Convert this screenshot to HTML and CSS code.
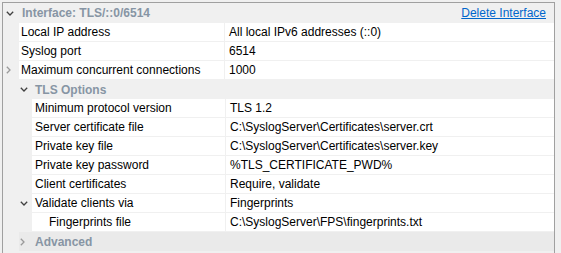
FILE: index.html
```html
<!DOCTYPE html>
<html lang="en">
<head>
  <meta charset="UTF-8" />
  <title>Interface settings</title>
  <link rel="stylesheet" href="styles.css">
</head>
<body>
  <div class="panel">
    <!-- Interface -->
    <div class="group-head top">
      <span class="toggle">
        <svg width="8" height="5" viewBox="0 0 8 5"><path d="M0.8 0.8 L4 4 L7.2 0.8" class="chev dark"/></svg>
      </span>
      <span class="group-title">Interface: TLS/::0/6514</span>
      <a class="head-link" href="#">Delete Interface</a>
    </div>

    <div class="row">
      <span class="toggle"></span>
      <div class="label">Local IP address</div>
      <div class="value">All local IPv6 addresses (::0)</div>
    </div>
    <div class="row">
      <span class="toggle"></span>
      <div class="label">Syslog port</div>
      <div class="value">6514</div>
    </div>
    <div class="row">
      <span class="toggle">
        <svg width="5" height="8" viewBox="0 0 5 8"><path d="M0.8 0.8 L4 4 L0.8 7.2" class="chev light"/></svg>
      </span>
      <div class="label">Maximum concurrent connections</div>
      <div class="value">1000</div>
    </div>

    <!-- TLS Options -->
    <div class="sub">
      <div class="group-head">
        <span class="toggle">
          <svg width="8" height="5" viewBox="0 0 8 5"><path d="M0.8 0.8 L4 4 L7.2 0.8" class="chev dark"/></svg>
        </span>
        <span class="group-title">TLS Options</span>
      </div>

      <div class="row">
        <span class="toggle"></span>
        <div class="label">Minimum protocol version</div>
        <div class="value">TLS 1.2</div>
      </div>
      <div class="row">
        <span class="toggle"></span>
        <div class="label">Server certificate file</div>
        <div class="value">C:\SyslogServer\Certificates\server.crt</div>
      </div>
      <div class="row">
        <span class="toggle"></span>
        <div class="label">Private key file</div>
        <div class="value">C:\SyslogServer\Certificates\server.key</div>
      </div>
      <div class="row">
        <span class="toggle"></span>
        <div class="label">Private key password</div>
        <div class="value">%TLS_CERTIFICATE_PWD%</div>
      </div>
      <div class="row">
        <span class="toggle"></span>
        <div class="label">Client certificates</div>
        <div class="value">Require, validate</div>
      </div>
      <div class="row">
        <span class="toggle">
          <svg width="8" height="5" viewBox="0 0 8 5"><path d="M0.8 0.8 L4 4 L7.2 0.8" class="chev dark"/></svg>
        </span>
        <div class="label">Validate clients via</div>
        <div class="value">Fingerprints</div>
      </div>
      <div class="row">
        <span class="toggle"></span>
        <div class="label child">Fingerprints file</div>
        <div class="value">C:\SyslogServer\FPS\fingerprints.txt</div>
      </div>

      <!-- Advanced -->
      <div class="group-head closed">
        <span class="toggle">
          <svg width="5" height="8" viewBox="0 0 5 8"><path d="M0.8 0.8 L4 4 L0.8 7.2" class="chev light"/></svg>
        </span>
        <span class="group-title">Advanced</span>
      </div>
    </div>
  </div>
</body>
</html>
```

FILE: styles.css
```css
html, body {
  margin: 0;
  padding: 0;
  background: #f0f0f0;
  font-family: 'Liberation Sans', Arial, sans-serif;
  font-size: 12px;
  color: #000;
}

.panel {
  box-sizing: border-box;
  width: 553px;
  height: 251px;
  margin: 2px 0 0 2px;
  border: 1px solid #a0a0a0;
  border-bottom: none;
  background: #f0f0f0;
  overflow: hidden;
}

.group-head {
  display: flex;
  align-items: center;
  height: 19px;
}

.group-head.top {
  height: 20px;
}

.group-head.closed {
  background: #eaeaea;
}

.group-title {
  font-weight: bold;
  color: #8795a4;
  padding-left: 3px;
}

.head-link {
  margin-left: auto;
  margin-right: 8px;
  color: #0066cc;
  text-decoration: underline;
}

.toggle {
  flex: none;
  width: 16px;
  height: 18px;
  display: flex;
  align-items: center;
  box-sizing: border-box;
  padding-left: 3px;
}

.chev {
  fill: none;
  stroke-width: 1.3;
}

.chev.dark {
  stroke: #404040;
}

.chev.light {
  stroke: #9a9a9a;
}

.row {
  display: flex;
  height: 19px;
}

.label, .value {
  background: #fff;
  border-bottom: 1px solid #f0f0f0;
  height: 18px;
  line-height: 18px;
  white-space: nowrap;
}

.label {
  width: 203px;
  padding-left: 2px;
}

.value {
  flex: 1;
  border-left: 1px solid #f0f0f0;
  padding-left: 4px;
}

/* nested group */
.sub {
  margin-left: 16px;
}

.sub .toggle {
  width: 13px;
  padding-left: 1px;
}

.sub .label {
  width: 190px;
  padding-left: 3px;
}

.sub .label.child {
  width: 176px;
  padding-left: 17px;
}
```
